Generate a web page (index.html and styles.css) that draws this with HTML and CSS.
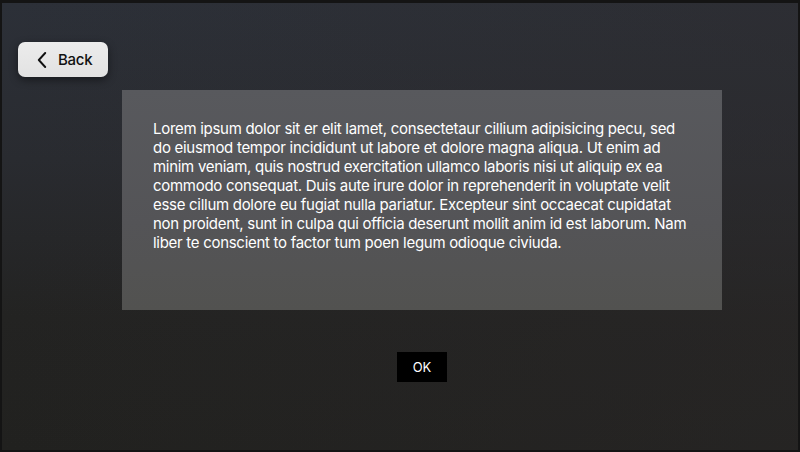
FILE: index.html
```html
<!DOCTYPE html>
<html lang="en">
<head>
<meta charset="utf-8">
<title>Dialog</title>
<link rel="stylesheet" href="styles.css">
</head>
<body>
<div class="screen">
  <button class="back-btn" type="button">
    <svg class="chev" width="10" height="16" viewBox="0 0 10 16" aria-hidden="true">
      <path d="M8.2 1 L1.8 8 L8.2 15" fill="none" stroke="#111" stroke-width="1.9" stroke-linecap="round" stroke-linejoin="round"/>
    </svg>
    <span>Back</span>
  </button>
  <div class="content">
    <div class="panel">
      <p class="message">Lorem ipsum dolor sit er elit lamet, consectetaur cillium adipisicing pecu, sed do eiusmod tempor incididunt ut labore et dolore magna aliqua. Ut enim ad minim veniam, quis nostrud exercitation ullamco laboris nisi ut aliquip ex ea commodo consequat. Duis aute irure dolor in reprehenderit in voluptate velit esse cillum dolore eu fugiat nulla pariatur. Excepteur sint occaecat cupidatat non proident, sunt in culpa qui officia deserunt mollit anim id est laborum. Nam liber te conscient to factor tum poen legum odioque civiuda.</p>
    </div>
    <button class="ok-btn" type="button">OK</button>
  </div>
</div>
</body>
</html>
```

FILE: styles.css
```css
html, body {
  margin: 0;
  padding: 0;
  background: #121212;
}

.screen {
  width: 800px;
  height: 452px;
  box-sizing: border-box;
  border: 2px solid #141414;
  border-top-width: 3px;
  background:
    linear-gradient(90deg, rgba(45, 49, 57, 0.0) 0%, rgba(46, 42, 43, 0.35) 100%),
    linear-gradient(180deg, #2c3038 0%, #292b30 35%, #232322 70%, #21211f 100%);
  font-family: Inter, "Noto Sans", "Liberation Sans", sans-serif;
  display: flex;
  flex-direction: column;
  align-items: flex-start;
}

.back-btn {
  margin: 39px 0 0 16px;
  width: 90px;
  height: 35px;
  border: none;
  border-radius: 7px;
  background: linear-gradient(180deg, #ececec 0%, #e2e2e2 100%);
  box-shadow: 0 3px 8px rgba(0, 0, 0, 0.45);
  display: flex;
  align-items: center;
  padding: 0 0 0 19px;
  gap: 11px;
  font-family: Inter, "Noto Sans", "Liberation Sans", sans-serif;
  font-size: 15px;
  font-weight: 500;
  letter-spacing: -0.3px;
  color: #111;
}

.chev {
  display: block;
}

.content {
  margin: 13px 0 0 120px;
  width: 600px;
  display: flex;
  flex-direction: column;
  align-items: center;
}

.panel {
  width: 600px;
  height: 220px;
  box-sizing: border-box;
  padding: 29px 28px 0 31px;
  background: linear-gradient(180deg, #58595d 0%, #545457 60%, #525250 100%);
}

.message {
  margin: 0;
  color: #ffffff;
  font-size: 15px;
  line-height: 19px;
  font-weight: 400;
  letter-spacing: -0.29px;
}

.ok-btn {
  margin-top: 42px;
  width: 50px;
  height: 30px;
  border: none;
  background: #000;
  color: #fff;
  font-family: Inter, "Noto Sans", "Liberation Sans", sans-serif;
  font-size: 13px;
  padding: 0;
}
```
